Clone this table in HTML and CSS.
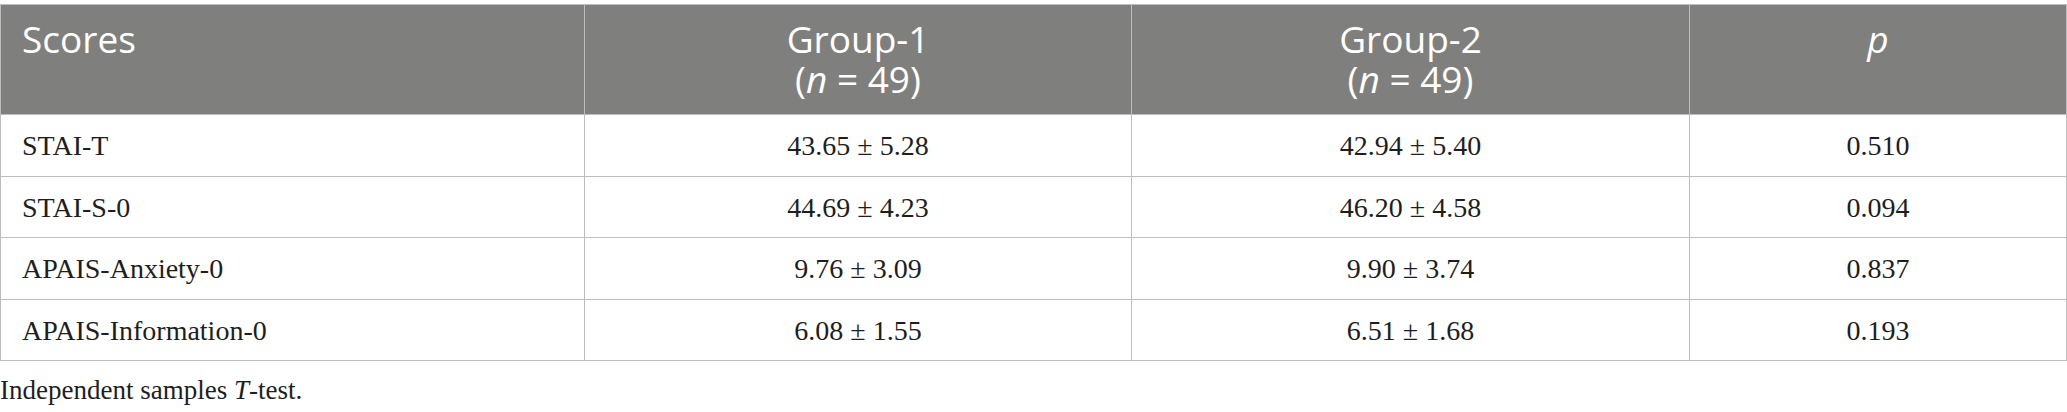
FILE: index.html
```html
<!DOCTYPE html>
<html lang="en">
<head>
<meta charset="utf-8">
<title>Scores table</title>
<link rel="stylesheet" href="styles.css">
</head>
<body>
<div class="wrap">
  <table class="data">
    <colgroup>
      <col class="c1">
      <col class="c2">
      <col class="c3">
      <col class="c4">
    </colgroup>
    <thead>
      <tr>
        <th class="left">Scores</th>
        <th>Group-1<br>(<i>n</i> = 49)</th>
        <th>Group-2<br>(<i>n</i> = 49)</th>
        <th><i>p</i></th>
      </tr>
    </thead>
    <tbody>
      <tr><td class="left">STAI-T</td><td>43.65 ± 5.28</td><td>42.94 ± 5.40</td><td>0.510</td></tr>
      <tr><td class="left">STAI-S-0</td><td>44.69 ± 4.23</td><td>46.20 ± 4.58</td><td>0.094</td></tr>
      <tr><td class="left">APAIS-Anxiety-0</td><td>9.76 ± 3.09</td><td>9.90 ± 3.74</td><td>0.837</td></tr>
      <tr><td class="left">APAIS-Information-0</td><td>6.08 ± 1.55</td><td>6.51 ± 1.68</td><td>0.193</td></tr>
    </tbody>
  </table>
  <p class="note">Independent samples <i>T</i>-test.</p>
</div>
</body>
</html>
```
FILE: styles.css
```css
html, body {
  margin: 0;
  padding: 0;
  background: #ffffff;
}

.wrap {
  padding-top: 4px;
}

.data {
  width: 2066px;
  border-collapse: collapse;
  table-layout: fixed;
}

.c1 { width: 584px; }
.c2 { width: 547px; }
.c3 { width: 558px; }
.c4 { width: 377px; }

.data th,
.data td {
  border: 1px solid #bdbdbd;
  text-align: center;
  vertical-align: top;
}

.data th {
  background: #7f807e;
  color: #ffffff;
  font-family: "Open Sans", "Noto Sans", sans-serif;
  font-weight: 400;
  font-size: 37px;
  line-height: 40px;
  padding: 14px 21px 15px 21px;
}

.data td {
  color: #1e1e1e;
  font-family: "Liberation Serif", "Times New Roman", serif;
  font-size: 28px;
  line-height: 30.5px;
  padding: 16px 21px 14px 21px;
}

.data .left {
  text-align: left;
}

.note {
  margin: 14px 0 0 0;
  font-family: "Liberation Serif", "Times New Roman", serif;
  font-size: 27px;
  line-height: 30px;
  color: #1e1e1e;
}
```
